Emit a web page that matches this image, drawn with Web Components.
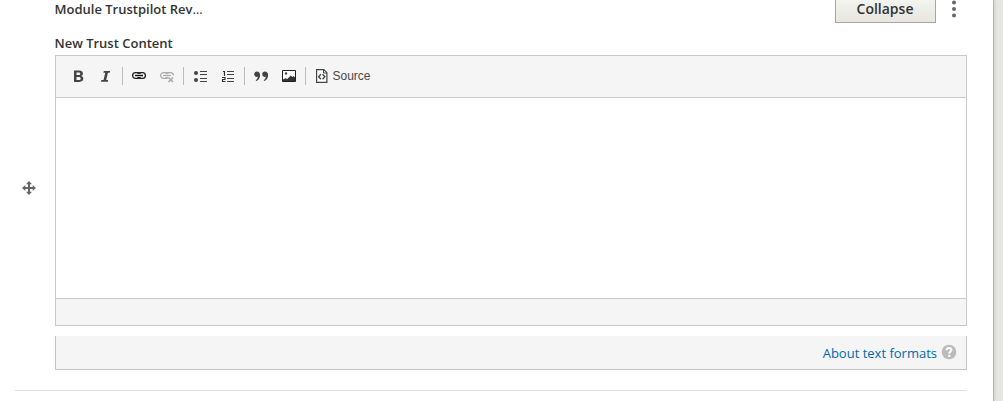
<!DOCTYPE html>
<html lang="en">
<head>
<meta charset="utf-8">
<title>Edit content</title>
<style>
html, body { margin: 0; height: 100%; overflow: hidden; background: #e7e7e1; }
body { font-family: "Open Sans", "Noto Sans", sans-serif; font-size: 13px; color: #333; }
</style>
</head>
<body>
<content-panel>
  <paragraph-header slot="head" label="Module Trustpilot Rev" action="Collapse"></paragraph-header>
  <drag-handle slot="handle"></drag-handle>
  <field-label>New Trust Content</field-label>
  <rich-editor></rich-editor>
  <format-bar>About text formats</format-bar>
</content-panel>
<script>
const define = (name, render) => customElements.define(name, class extends HTMLElement {
  connectedCallback() {
    if (this.shadowRoot) return;
    const template = document.createElement('template');
    template.innerHTML = render(this);
    this.attachShadow({ mode: 'open' }).append(template.content.cloneNode(true));
  }
});

const icons = {
  bold: '<path fill-rule="evenodd" d="M4 2.600h5c2.500 0 3.900 1 3.900 2.900 0 1.300-.7 2.100-1.700 2.400 1.300.3 2.100 1.200 2.100 2.700 0 2.100-1.500 3.300-4 3.300H4zM6.500 4.500V7h2c1.200 0 1.800-.4 1.800-1.300S9.700 4.500 8.500 4.500zM6.500 8.900V12h2.300c1.200 0 1.900-.5 1.900-1.600 0-1-.7-1.500-2-1.500z" fill="#444"/>',
  italic: '<path d="M5.900 3h6.200l-.4 1.700H9.900L8.200 12h2l-.4 1.700H3L3.400 12h2.100l1.800-7.300h-2z" fill="#444"/>',
  link: '<g fill="none" stroke="#1c1c1c"><rect x="1.600" y="4.600" width="7.800" height="5.800" rx="2.900" stroke-width="1.300"/><rect x="6.600" y="4.600" width="7.800" height="5.800" rx="2.900" stroke-width="1.300"/><path d="M4 7.500h8" stroke="#fff" stroke-width="3"/><path d="M4 7.500h8" stroke="#111" stroke-width="1.500"/></g>',
  unlink: '<g fill="none" stroke="#aaa" stroke-width="1.200"><rect x="1.600" y="4.600" width="7.800" height="5.800" rx="2.900"/><path d="M9 10.400Q6.600 10 6.600 7.500A2.900 2.900 0 0 1 9.500 4.600h2Q14.400 4.600 14.400 7.500"/><path d="M4 7.500h8" stroke="#f5f5f5" stroke-width="2.800"/><path d="M4 7.500h8"/><path d="m9.500 9.500 4.500 4.500m0-4.500L9.500 14" stroke="#f5f5f5" stroke-width="3"/><path d="m9.500 9.500 4.500 4.500m0-4.500L9.500 14" stroke-width="1.600"/></g>',
  bullets: '<g fill="#444"><circle cx="4" cy="5" r="2.050"/><circle cx="4" cy="12" r="2.050"/></g><path d="M8 3.500h7M8 6.500h7M8 10.500h7M8 13.500h7" stroke="#444"/>',
  numbers: '<path d="M3 3.500h1.500V8M2 9.500h3v2H2.500v2H5.500" fill="none" stroke="#333" stroke-width="1.150"/><path d="M7 3.500h7M7 6.500h7M7 10.500h7M7 13.500h7" stroke="#444"/>',
  quote: '<g fill="#444"><path d="M3.900 3.500c1.900 0 3.200 1.300 3.200 3.400 0 3.100-1.600 5.500-4 6.200l-.4-.9c1.300-.8 2-1.900 2.100-3.400-2 .4-3.600-.8-3.600-2.600 0-1.600 1.200-2.700 2.700-2.700z"/><path d="M11.900 3.500c1.900 0 3.200 1.300 3.200 3.400 0 3.100-1.600 5.500-4 6.200l-.4-.9c1.300-.8 2-1.900 2.100-3.400-2 .4-3.600-.8-3.600-2.600 0-1.600 1.200-2.700 2.700-2.700z"/></g>',
  image: '<path d="M1.500 2.500h13v11h-13z" fill="#fff" stroke="#1f1f1f"/><path d="M2 13v-1.500l2.300-1.300 2 .8 3.500-3.500 1.500 1.500L12.500 8 14 9.500V13z" fill="#333"/><circle cx="5" cy="5.500" r="1.200" fill="#444"/>',
  source: '<path d="M2.600 1.600h7.200l3.100 3.100v9.700H2.600z" fill="#fff" stroke="#444" stroke-width="1.200"/><path d="M9.500 1.500v3.500H13" fill="none" stroke="#444"/><path d="M6.900 6.300 4.700 8.800l2.200 2.500m1.700-5 2.200 2.500-2.200 2.500" fill="none" stroke="#444" stroke-width="1.400"/>'
};

define('content-panel', () => `
<style>
:host { display: block; box-sizing: border-box; width: 994px; height: 401px; padding: 0 26px 0 15px; background: #fff; border-right: 1px solid #b3b3b0; box-shadow: 0 0 4px rgba(0,0,0,.16); }
.row { box-sizing: border-box; height: 391px; border-bottom: 1px solid #e2e1dc; display: grid; grid-template-columns: 40px 912px; grid-template-rows: 34px 1fr; }
.head { grid-column: 2; }
.side { grid-column: 1; grid-row: 2; padding-top: 146px; }
.body { grid-column: 2; grid-row: 2; }
</style>
<div class="row">
  <div class="head"><slot name="head"></slot></div>
  <div class="side"><slot name="handle"></slot></div>
  <div class="body"><slot></slot></div>
</div>`);

define('paragraph-header', el => `
<style>
:host { display: flex; height: 34px; font-weight: 600; }
.title { flex: 1; line-height: 18px; text-indent: -.5px; }
.title span { font-weight: 400; }
button { box-sizing: border-box; width: 101px; height: 29px; margin: -6px 12px 0 0; padding: 0 1px 0 0; border: 1px solid #a6a6a6; background: linear-gradient(#f6f6f3, #e7e7df); color: #333; font: 600 14px/27px "Open Sans", sans-serif; }
svg { width: 12px; height: 22px; margin-right: 7px; }
</style>
<div class="title">${el.getAttribute('label')}<span>…</span></div>
<button type="button">${el.getAttribute('action')}</button>
<svg viewBox="0 0 12 22" fill="#666"><circle cx="6" cy="2.500" r="2"/><circle cx="6" cy="9" r="2"/><circle cx="6" cy="15.500" r="2"/></svg>`);

define('drag-handle', () => `
<style>:host { display: block; padding-left: 6px; } svg { display: block; }</style>
<svg width="16" height="16" viewBox="0 0 16 16" fill="#666"><path d="M8 1l3 3.300H9V7h2.700V5L15 8l-3.300 3V9H9v2.700h2L8 15l-3-3.300h2V9H4.300v2L1 8l3.300-3v2H7V4.300H5z"/></svg>`);

define('field-label', () => `
<style>:host { display: block; height: 21px; line-height: 18px; font-weight: 600; text-indent: -.5px; }</style><slot></slot>`);

define('tool-button', el => `
<style>
:host { display: flex; align-items: center; height: 28px; padding: 0 6px; font: 12px/16px "Liberation Sans", Arial, sans-serif; color: #484848; }
svg { display: block; flex: none; }
.text { margin-left: 2.500px; }
</style>
<svg width="16" height="16" viewBox="0 0 16 16">${icons[el.getAttribute('icon')]}</svg>${el.textContent ? '<span class="text"><slot></slot></span>' : ''}`);

define('tool-separator', () => `
<style>:host { display: block; width: 1px; height: 18px; margin: 0 2px; background: #bcbcbc; }</style>`);

define('rich-editor', () => `
<style>
:host { display: block; box-sizing: border-box; width: 912px; height: 271px; border: 1px solid #c9c9c9; background: #fff; }
.tools { display: flex; align-items: center; box-sizing: border-box; height: 42px; padding: 0 8px 1px; background: #f5f5f5; border-bottom: 1px solid #c9c9c9; }
.area { height: 200px; }
.foot { box-sizing: border-box; height: 27px; background: #f5f5f5; border-top: 1px solid #c9c9c9; }
</style>
<div class="tools">
  <tool-button icon="bold"></tool-button><tool-button icon="italic"></tool-button><tool-separator></tool-separator>
  <tool-button icon="link"></tool-button><tool-button icon="unlink"></tool-button><tool-separator></tool-separator>
  <tool-button icon="bullets"></tool-button><tool-button icon="numbers"></tool-button><tool-separator></tool-separator>
  <tool-button icon="quote"></tool-button><tool-button icon="image"></tool-button><tool-separator></tool-separator>
  <tool-button icon="source">Source</tool-button>
</div>
<div class="area"></div>
<div class="foot"></div>`);

define('format-bar', () => `
<style>
:host { display: flex; justify-content: flex-end; align-items: center; box-sizing: border-box; height: 34px; margin-top: 10px; padding-right: 9px; border: 1px solid #c4c4c4; border-top: 0; background: #f5f5f5; color: #0068b0; line-height: 18px; }
svg { margin: -2px 0 0 4px; }
</style>
<slot></slot>
<svg width="16" height="16" viewBox="0 0 16 16"><circle cx="8" cy="8" r="7.300" fill="#bbb"/><path d="M5.700 6.200C5.700 4.700 6.600 4 8 4s2.400.7 2.400 2c0 1.600-2.200 1.700-2.200 3.500" fill="none" stroke="#fff" stroke-width="2.100"/><path d="M7.100 10.800h2.200v2H7.100z" fill="#fff"/></svg>`);
</script>
</body>
</html>
